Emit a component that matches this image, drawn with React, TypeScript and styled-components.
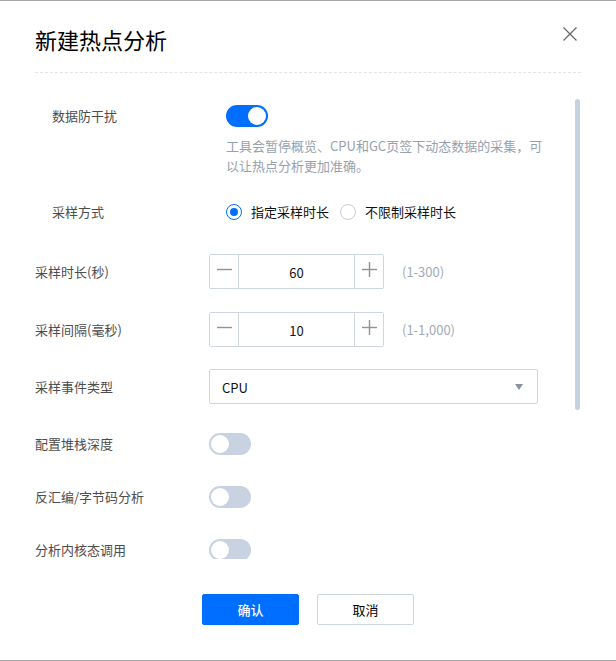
import React from "react";
import styled, { createGlobalStyle } from "styled-components";

const Global = createGlobalStyle`
  html, body { margin: 0; padding: 0; background: #fff; }
  body { font-family: "Noto Sans", "Noto Sans CJK SC", sans-serif; }
  * { box-sizing: border-box; }
`;

const BLUE = "#006eff";
const FONT = `"Noto Sans CJK SC", "Noto Sans", sans-serif`;

const Dialog = styled.div`
  width: 616px;
  height: 661px;
  border-top: 1px solid #a6a6a6;
  border-bottom: 1px solid #a6a6a6;
  display: flex;
  flex-direction: column;
  font-family: ${FONT};
  background: #fff;
`;

const Header = styled.div`
  margin: 0 35px;
  padding-top: 23px;
  padding-bottom: 18px;
  border-bottom: 1px dashed #dfe4ec;
  display: flex;
  justify-content: space-between;
  align-items: flex-start;
`;

const Title = styled.h1`
  margin: 0;
  font-size: 22px;
  line-height: 30px;
  font-weight: 400;
  color: #000;
`;

const CloseButton = styled.button`
  border: 0;
  background: none;
  padding: 0;
  margin: 3px 4px 0 0;
  width: 14px;
  height: 14px;
  display: flex;
  cursor: pointer;
`;

const Body = styled.div`
  position: relative;
  height: 486px;
  overflow: hidden;
  padding-top: 32px;
`;

const ScrollThumb = styled.div`
  position: absolute;
  right: 36px;
  top: 26px;
  width: 5px;
  height: 311px;
  border-radius: 3px;
  background: #c6d1e1;
`;

const Section = styled.div<{ $indent?: boolean }>`
  padding-left: ${(p) => (p.$indent ? "52px" : "35px")};
`;

const Row = styled.div<{ $mt?: number; $top?: boolean }>`
  display: grid;
  grid-template-columns: 174px 1fr;
  align-items: ${(p) => (p.$top ? "start" : "center")};
  margin-top: ${(p) => p.$mt ?? 0}px;
`;

const Label = styled.div`
  font-size: 13px;
  line-height: 22px;
  color: #4d4d4d;
`;

const Control = styled.div`
  display: flex;
  align-items: center;
`;

const Stack = styled.div`
  display: flex;
  flex-direction: column;
  align-items: flex-start;
`;

const Desc = styled.p`
  margin: 9px 0 0 0;
  width: 324px;
  font-size: 13px;
  line-height: 20px;
  color: #98a1ae;
`;

const SwitchTrack = styled.div<{ $on?: boolean }>`
  width: 42px;
  height: 22px;
  border-radius: 11px;
  background: ${(p) => (p.$on ? BLUE : "#c8d2e1")};
  padding: 2px;
  display: flex;
  justify-content: ${(p) => (p.$on ? "flex-end" : "flex-start")};
`;

const SwitchKnob = styled.div`
  width: 18px;
  height: 18px;
  border-radius: 50%;
  background: #fff;
`;

const RadioGroup = styled.div`
  display: flex;
  align-items: center;
  gap: 11px;
`;

const RadioOption = styled.label`
  display: flex;
  align-items: center;
  gap: 9px;
  font-size: 13px;
  line-height: 22px;
  color: #111;
`;

const RadioCircle = styled.span<{ $checked?: boolean }>`
  width: 16px;
  height: 16px;
  border-radius: 50%;
  border: 1px solid ${(p) => (p.$checked ? BLUE : "#c5cdd9")};
  display: flex;
  align-items: center;
  justify-content: center;
  background: #fff;
  &::after {
    content: "";
    width: 8px;
    height: 8px;
    border-radius: 50%;
    background: ${(p) => (p.$checked ? BLUE : "transparent")};
  }
`;

const Stepper = styled.div`
  width: 175px;
  height: 35px;
  border: 1px solid #cfd6e0;
  border-radius: 2px;
  display: flex;
`;

const StepButton = styled.button<{ $side: "left" | "right" }>`
  width: 29px;
  border: 0;
  padding: 0;
  background: #fff;
  display: flex;
  align-items: flex-start;
  justify-content: center;
  padding-top: 7px;
  ${(p) => (p.$side === "left" ? "border-right" : "border-left")}: 1px solid #cfd6e0;
`;

const StepValue = styled.div`
  flex: 1;
  display: flex;
  align-items: center;
  justify-content: center;
  font-size: 13px;
  color: #111;
  padding-top: 2px;
`;

const Hint = styled.span`
  margin-left: 18px;
  font-size: 13px;
  color: #a2aab6;
`;

const Select = styled.div`
  width: 329px;
  height: 35px;
  border: 1px solid #cfd6e0;
  border-radius: 2px;
  display: flex;
  align-items: center;
  justify-content: space-between;
  padding: 2px 14px 0 12px;
  font-size: 13px;
  color: #111;
`;

const Caret = styled.span`
  width: 0;
  height: 0;
  border-left: 4px solid transparent;
  border-right: 4px solid transparent;
  border-top: 6px solid #8a929e;
  margin-top: -2px;
`;

const Footer = styled.div`
  display: flex;
  justify-content: center;
  gap: 18px;
  padding-top: 35px;
`;

const Button = styled.button<{ $primary?: boolean }>`
  width: 97px;
  height: 31px;
  border-radius: 2px;
  font-family: ${FONT};
  font-size: 13px;
  cursor: pointer;
  border: 1px solid ${(p) => (p.$primary ? BLUE : "#cfd6e0")};
  background: ${(p) => (p.$primary ? BLUE : "#fff")};
  color: ${(p) => (p.$primary ? "#fff" : "#000")};
  font-weight: ${(p) => (p.$primary ? 500 : 400)};
`;

const Switch = ({ on }: { on?: boolean }) => (
  <SwitchTrack $on={on}>
    <SwitchKnob />
  </SwitchTrack>
);

const Minus = () => (
  <svg width="15" height="15" viewBox="0 0 15 15">
    <line x1="0" y1="7.5" x2="15" y2="7.5" stroke="#8b93a0" strokeWidth="1.4" />
  </svg>
);

const Plus = () => (
  <svg width="15" height="15" viewBox="0 0 15 15">
    <line x1="0" y1="7.5" x2="15" y2="7.5" stroke="#8b93a0" strokeWidth="1.4" />
    <line x1="7.5" y1="0" x2="7.5" y2="15" stroke="#8b93a0" strokeWidth="1.4" />
  </svg>
);

const NumberField = ({ value, hint }: { value: string; hint: string }) => (
  <Control>
    <Stepper>
      <StepButton $side="left">
        <Minus />
      </StepButton>
      <StepValue>{value}</StepValue>
      <StepButton $side="right">
        <Plus />
      </StepButton>
    </Stepper>
    <Hint>{hint}</Hint>
  </Control>
);

export default function App() {
  return (
    <>
      <Global />
      <Dialog>
        <Header>
          <Title>新建热点分析</Title>
          <CloseButton aria-label="关闭">
            <svg width="14" height="14" viewBox="0 0 14 14">
              <path d="M0.5 0.5 L13.5 13.5 M13.5 0.5 L0.5 13.5" stroke="#666" strokeWidth="1.2" fill="none" />
            </svg>
          </CloseButton>
        </Header>
        <Body>
          <ScrollThumb />
          <Section $indent>
            <Row $top>
              <Label>数据防干扰</Label>
              <Stack>
                <Switch on />
                <Desc>工具会暂停概览、CPU和GC页签下动态数据的采集，可以让热点分析更加准确。</Desc>
              </Stack>
            </Row>
            <Row $mt={25}>
              <Label>采样方式</Label>
              <RadioGroup>
                <RadioOption>
                  <RadioCircle $checked />
                  指定采样时长
                </RadioOption>
                <RadioOption>
                  <RadioCircle />
                  不限制采样时长
                </RadioOption>
              </RadioGroup>
            </Row>
          </Section>
          <Section>
            <Row $mt={31}>
              <Label>采样时长(秒)</Label>
              <NumberField value="60" hint="(1-300)" />
            </Row>
            <Row $mt={23}>
              <Label>采样间隔(毫秒)</Label>
              <NumberField value="10" hint="(1-1,000)" />
            </Row>
            <Row $mt={22}>
              <Label>采样事件类型</Label>
              <Control>
                <Select>
                  <span>CPU</span>
                  <Caret />
                </Select>
              </Control>
            </Row>
            <Row $mt={29}>
              <Label>配置堆栈深度</Label>
              <Control>
                <Switch />
              </Control>
            </Row>
            <Row $mt={31}>
              <Label>反汇编/字节码分析</Label>
              <Control>
                <Switch />
              </Control>
            </Row>
            <Row $mt={31}>
              <Label>分析内核态调用</Label>
              <Control>
                <Switch />
              </Control>
            </Row>
          </Section>
        </Body>
        <Footer>
          <Button $primary>确认</Button>
          <Button>取消</Button>
        </Footer>
      </Dialog>
    </>
  );
}
